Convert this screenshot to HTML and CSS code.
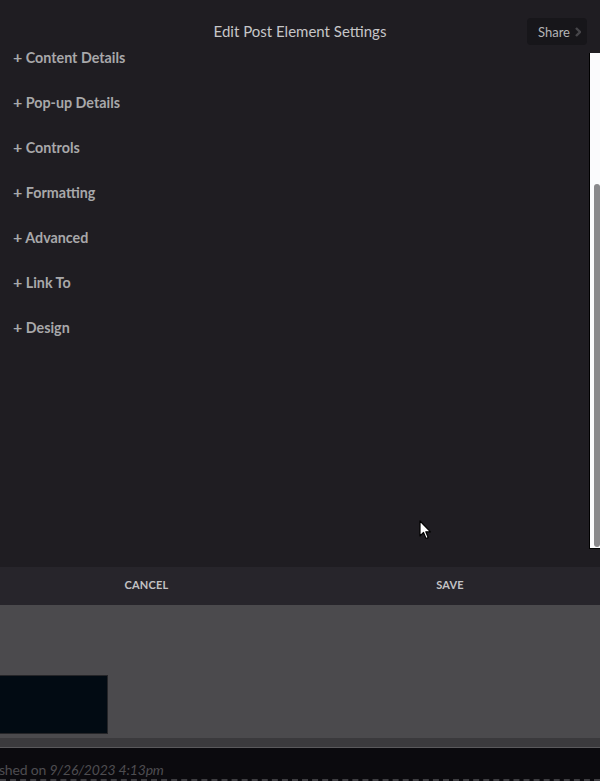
FILE: index.html
```html
<!DOCTYPE html>
<html lang="en">
<head>
    <meta charset="UTF-8">
    <meta name="viewport" content="width=device-width, initial-scale=1.0">
    <title>Edit Post Element Settings</title>
    <link rel="stylesheet" href="styles.css">
</head>
<body>
    <div class="modal">
        <header class="modal-header">
            <h1>Edit Post Element Settings</h1>
            <button type="button" class="share">Share
                <svg class="chevron" width="6" height="10" viewBox="0 0 6 10"><path d="M1 1 L5 5 L1 9" fill="none" stroke="#47464a" stroke-width="2.4"/></svg>
            </button>
        </header>

        <div class="modal-body">
            <!-- settings sections -->
            <ul class="sections">
                <li><span class="plus">+</span> Content Details</li>
                <li><span class="plus">+</span> Pop-up Details</li>
                <li><span class="plus">+</span> Controls</li>
                <li><span class="plus">+</span> Formatting</li>
                <li><span class="plus">+</span> Advanced</li>
                <li><span class="plus">+</span> Link To</li>
                <li><span class="plus">+</span> Design</li>
            </ul>
            <div class="scrollbar">
                <div class="thumb"></div>
            </div>
        </div>

        <div class="modal-actions">
            <button type="button">Cancel</button>
            <button type="button">Save</button>
        </div>
    </div>

    <div class="preview">
        <div class="preview-block"></div>
    </div>
    <div class="divider"></div>

    <footer>
        <p>shed on <em>9/26/2023 4:13pm</em></p>
    </footer>

    <svg class="cursor" width="13" height="20" viewBox="0 0 13 20">
        <path d="M1 1 L1 16 L4.5 12.5 L7 18.5 L9.2 17.6 L6.8 11.8 L11.5 11.8 Z" fill="#fff" stroke="#000" stroke-width="1.2" stroke-linejoin="round"/>
    </svg>
</body>
</html>
```

FILE: styles.css
```css
body {
    font-family: Lato, 'Liberation Sans', sans-serif;
    background-color: #0b0a0e;
    margin: 0;
    padding: 0;
    width: 600px;
    height: 781px;
    overflow: hidden;
    position: relative;
}

.modal {
    height: 605px;
    background-color: #1f1d22;
    display: flex;
    flex-direction: column;
}

.modal-header {
    height: 50px;
    flex-shrink: 0;
    display: flex;
    align-items: flex-start;
    justify-content: center;
    position: relative;
    z-index: 1;
    background-color: #1f1d22;
}

.modal-header h1 {
    margin: 22px 0 0;
    font-size: 15px;
    font-weight: normal;
    color: #c6c6c8;
    line-height: 18px;
}

.share {
    position: absolute;
    top: 18px;
    right: 13px;
    width: 60px;
    height: 27px;
    background: #17161a;
    color: #b4b4b6;
    border: none;
    border-radius: 4px;
    font-family: inherit;
    font-size: 13px;
    padding: 0 0 0 11px;
    text-align: left;
    display: flex;
    align-items: center;
    gap: 5px;
}

.modal-body {
    flex: 1;
    display: flex;
    overflow: hidden;
}

.sections {
    flex: 1;
    list-style: none;
    margin: -3px 0 0;
    padding: 0 0 0 13px;
}

.sections li {
    height: 20px;
    line-height: 20px;
    margin-bottom: 25px;
    font-size: 14.3px;
    font-weight: bold;
    color: #a8a8aa;
}

.sections .plus {
    font-size: 16px;
}

.scrollbar {
    width: 11px;
    height: 496px;
    margin-top: 3px;
    background: #fbfbfd;
    border-left: 1px solid #000;
    border-bottom: 1px solid #000;
    padding-top: 131px;
    box-sizing: border-box;
    flex-shrink: 0;
}

.thumb {
    width: 6px;
    height: 363px;
    margin-left: 4px;
    background: #8a898c;
    border-radius: 3px;
}

.modal-actions {
    height: 38px;
    flex-shrink: 0;
    background-color: #27252b;
    display: grid;
    grid-template-columns: 1fr 1fr;
}

.modal-actions button {
    background: none;
    border: none;
    color: #c2c2c4;
    font-family: inherit;
    font-size: 11px;
    font-weight: bold;
    text-transform: uppercase;
    letter-spacing: 0.2px;
    padding-bottom: 4px;
    cursor: pointer;
}

.modal-actions button:first-child {
    padding-right: 13px;
}

.preview {
    height: 133px;
    background-color: #4b4a4d;
    padding-top: 70px;
    box-sizing: border-box;
}

.preview-block {
    width: 108px;
    height: 59px;
    background: #020b13;
    border: 1px solid #252528;
    border-left: none;
    box-sizing: border-box;
}

.divider {
    height: 10px;
    background: #3b3a3d;
    border-bottom: 1px solid #5a595c;
    box-sizing: border-box;
}

footer {
    height: 33px;
    background-color: #0b0a0e;
    border-bottom: 2px dashed #3e3d41;
    box-sizing: border-box;
}

footer p {
    margin: 0 0 0 -1px;
    padding-top: 13px;
    font-size: 14px;
    letter-spacing: -0.2px;
    color: #4e4d51;
}

.cursor {
    position: absolute;
    left: 419px;
    top: 520px;
}
```
